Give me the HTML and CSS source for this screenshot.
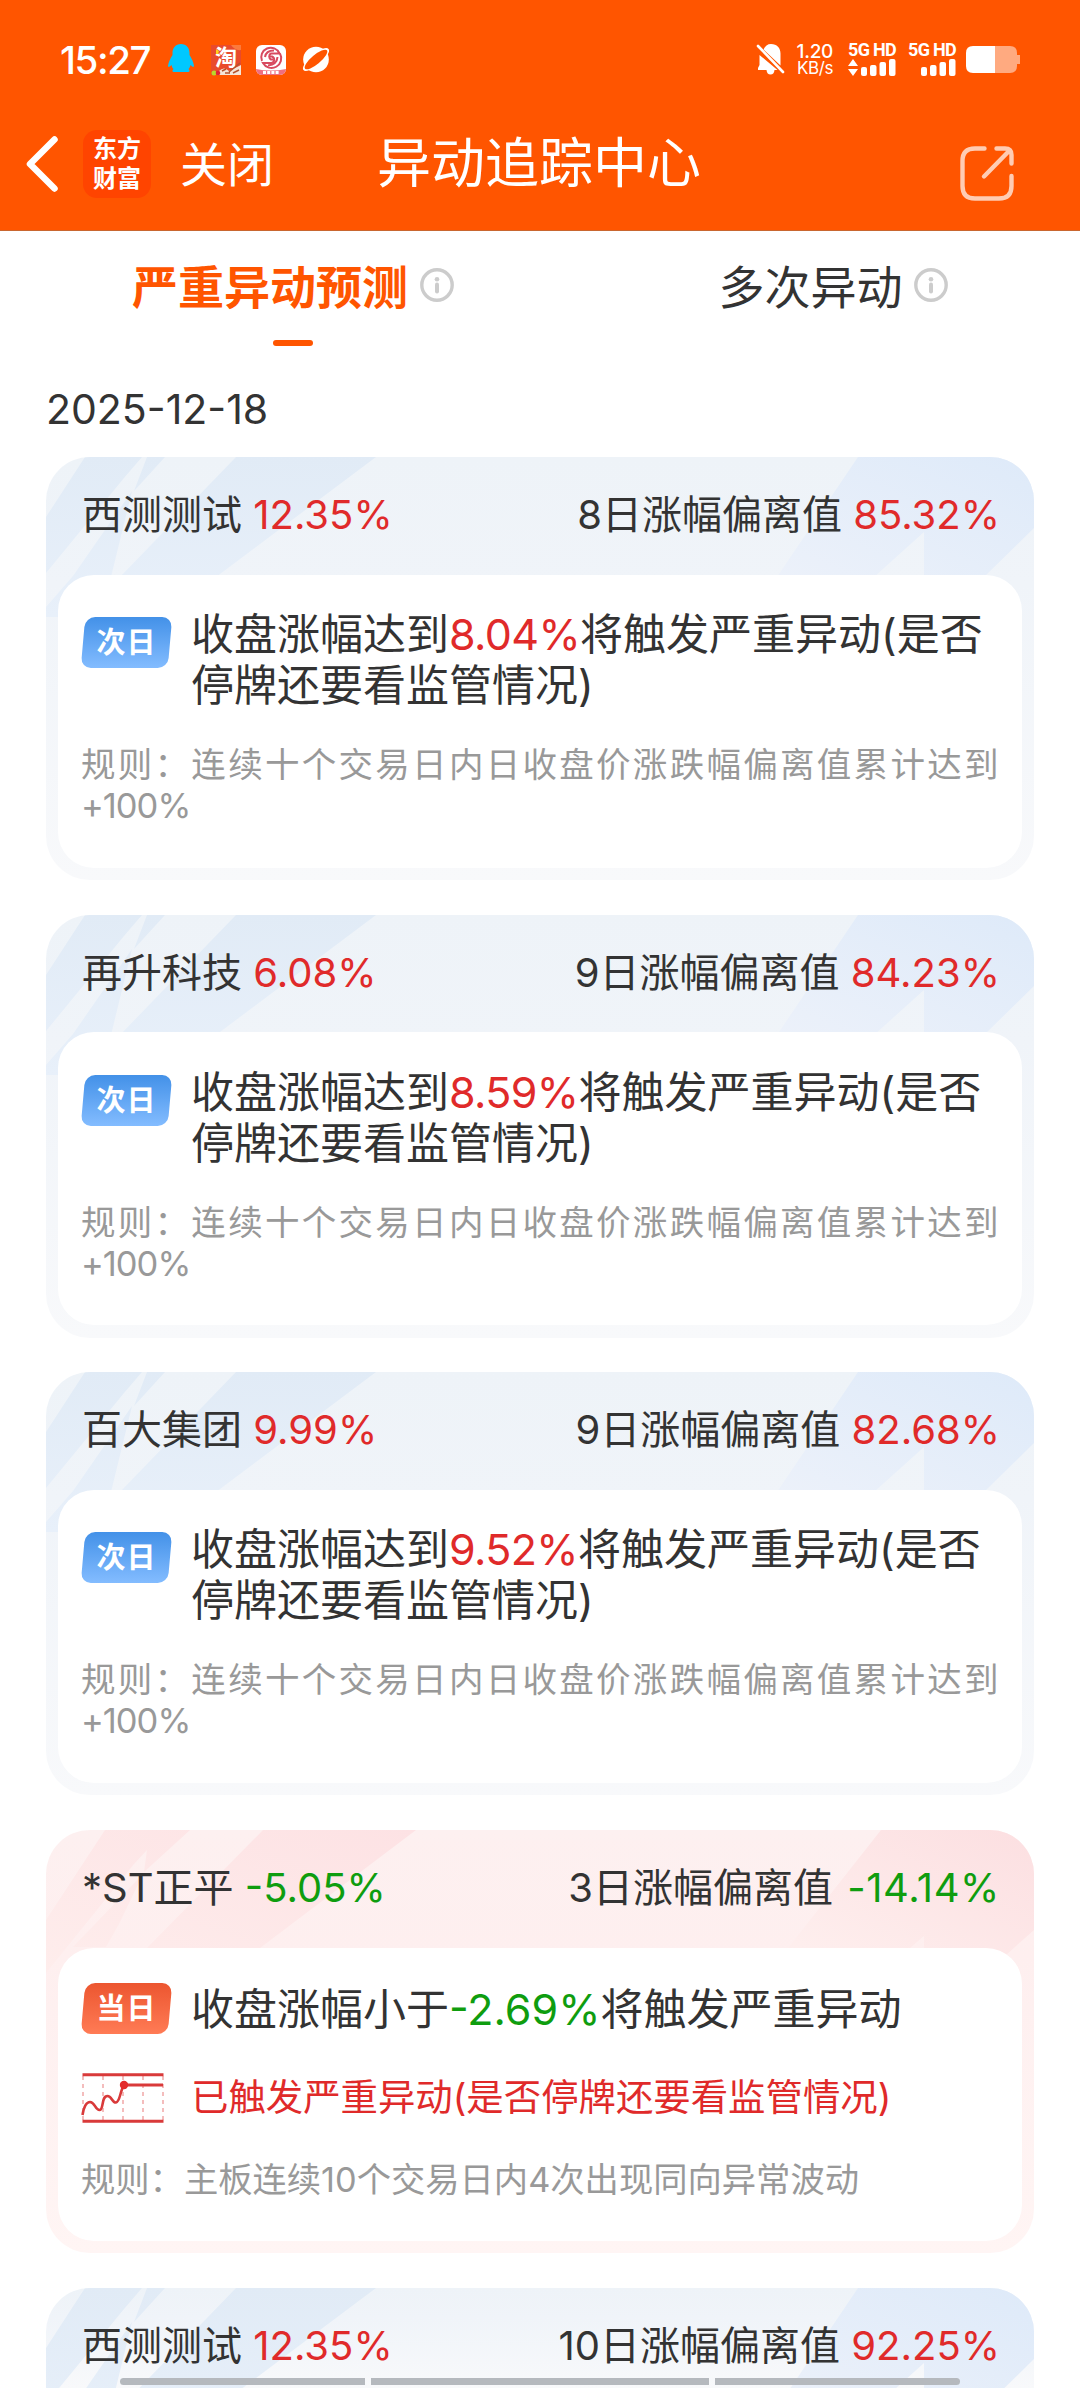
FILE: index.html
```html
<!DOCTYPE html>
<html lang="zh-CN">
<head>
<meta charset="utf-8">
<title>异动追踪中心</title>
<link rel="stylesheet" href="styles.css">
</head>
<body>
<svg class="defs" width="0" height="0" aria-hidden="true">
  <defs>
    <linearGradient id="blueL" x1="0" y1="0" x2="0" y2="1"><stop offset="0" stop-color="#e1ebf6"/><stop offset="1" stop-color="#e8f0fa"/></linearGradient>
    <linearGradient id="blueR" x1="0" y1="1" x2="1" y2="0"><stop offset="0" stop-color="#ecf1fa"/><stop offset="1" stop-color="#deeaf9"/></linearGradient>
    <linearGradient id="redL" x1="0" y1="1" x2="1" y2="0"><stop offset="0" stop-color="#feedec"/><stop offset="1" stop-color="#fde2e4"/></linearGradient>
    <linearGradient id="redR" x1="0" y1="1" x2="1" y2="0"><stop offset="0" stop-color="#feefee"/><stop offset="1" stop-color="#fcdfe1"/></linearGradient>
    <symbol id="rays-blue" viewBox="0 0 988 160">
      <path fill="url(#blueL)" d="M39 0H96L78 21L0 116V60Z M101 0H119L88 34Z M86 34L65 120L52 160H0V150L27 119Z M190 0H330L170 120H74Z"/>
      <path fill="url(#blueR)" d="M812 0H988V71L938 120H878V75L828 120H731Z"/>
    </symbol>
    <symbol id="rays-red" viewBox="0 0 988 160">
      <path fill="url(#redL)" d="M59 0H144L98 42L101 20L88 34L0 143V90Z M97 44L73 94L60 117H27Z M217 0H370L214 118H101Z"/>
      <path fill="url(#redR)" d="M835 0H988V100L960 125L878 118V106L864 118H742Z"/>
    </symbol>
    <symbol id="info" viewBox="0 0 34 34">
      <circle cx="17" cy="17" r="15.2" fill="none" stroke="#ccc" stroke-width="3.4"/>
      <circle cx="17" cy="11.3" r="2.3" fill="#ccc"/>
      <path d="M17 16.5V23.5" stroke="#ccc" stroke-width="4" stroke-linecap="round"/>
    </symbol>
  </defs>
</svg>

<header class="top">
  <div class="status">
    <span class="clock">15:27</span>
    <svg class="qq" viewBox="0 0 26 28"><path fill="#00c8ff" d="M13 0C18.500 0 21.500 4 21.500 9V11C23.500 14 25.500 18 26 22C26 23.500 24.500 23 22.500 21C22 23 21.500 24 20.500 25C22 26 22 28 20 28H6C4 28 4 26 5.500 25C4.500 24 4 23 3.500 21C1.500 23 0 23.500 0 22C.5 18 2.500 14 4.500 11V9C4.500 4 7.500 0 13 0Z"/></svg>
    <span class="taobao">淘
      <svg viewBox="0 0 30 30"><path fill="#fb7a3c" d="M20 0H30V5Q24 6 20 0Z"/><path fill="#ffd21c" d="M5 4L8 6L7 9H5Z"/><path fill="#f5e6d8" d="M8 26Q13 21 18 26L30 20V30H8Z"/><path stroke="#b5542f" stroke-width="1.500" d="M18 27L29 18M11 26L15 24M14 28H19M22 28L28 25"/><circle cx="3" cy="28" r="2.500" fill="#b9d92b"/><circle cx="7" cy="28" r="2.300" fill="#e02035"/></svg>
    </span>
    <svg class="swirl" viewBox="0 0 30 30"><defs><clipPath id="app"><rect width="30" height="30" rx="6"/></clipPath></defs><g clip-path="url(#app)"><rect width="30" height="30" fill="#fff"/><path d="M0 24Q15 27 30 24V30H0Z" fill="#ef6f81"/><g fill="none" stroke="#d84a60" stroke-width="2"><path d="M6 16A9.300 9.300 0 0 1 23.500 8.500H15A3.400 3.400 0 0 0 15 14.500H17"/><path d="M24 8.500A9.300 9.300 0 0 1 7 18H15.500A3.400 3.400 0 0 0 16 11.500H14"/><path d="M9 12Q10 5.500 18 5.500M21.500 12Q21 19.500 12 20.500"/></g><path d="M7 27.500H23" stroke="#fff" stroke-width="3" stroke-dasharray="3 1.200"/></g></svg>
    <svg class="planet" viewBox="0 0 30 28"><circle cx="15" cy="14" r="13.300" fill="#fff"/><g transform="rotate(-40 15 14)"><ellipse cx="15" cy="14" rx="17" ry="5.800" fill="#fff"/><ellipse cx="15" cy="14" rx="14.800" ry="4.700" fill="#ff5500"/></g></svg>
    <span class="spring"></span>
    <svg class="bell" viewBox="0 0 27 31"><path fill="#fff" d="M6.500 5.500C8 2 10.500 0 14 0C20 0 23.500 4 23.500 9.500V21.500ZM2.500 11L20.500 26H17.500Q17 30.500 13.500 30.500Q10 30.500 9.500 26H1V24L2.500 21Z"/><path d="M1 2L26 28" stroke="#fff" stroke-width="2.600" stroke-linecap="round"/></svg>
    <span class="speed"><b>1.20</b><i>KB/s</i></span>
    <span class="sim"><b>5G HD</b><svg viewBox="0 0 48 17"><g fill="#fff"><path d="M0 7L5 0L10 7Z M0 10H10L5 17Z"/><rect x="13" y="8" width="6" height="9" rx="2"/><rect x="22" y="6" width="6.500" height="11" rx="2"/><rect x="31.500" y="3" width="6.500" height="14" rx="2"/><rect x="41" y="0" width="6.500" height="17" rx="2"/></g></svg></span>
    <span class="sim"><b>5G HD</b><svg viewBox="0 0 48 17"><g fill="#fff"><rect x="13" y="8" width="6" height="9" rx="2"/><rect x="22" y="6" width="6.500" height="11" rx="2"/><rect x="31.500" y="3" width="6.500" height="14" rx="2"/><rect x="41" y="0" width="6.500" height="17" rx="2"/></g></svg></span>
    <svg class="battery" viewBox="0 0 54 27"><path fill="#ffaa80" d="M28 0H44Q51 0 51 7V9H54V18H51V20Q51 27 44 27H28Z"/><path fill="#fff" d="M7 0H29V27H7Q0 27 0 20V7Q0 0 7 0Z"/></svg>
  </div>
  <nav class="bar">
    <svg class="back" viewBox="0 0 32 56"><path d="M28.500 3.500L4 28L28.500 52.500" fill="none" stroke="#fff" stroke-width="6.500" stroke-linecap="round" stroke-linejoin="round"/></svg>
    <span class="logo">东方<br>财富</span>
    <span class="close">关闭</span>
    <h1>异动追踪中心</h1>
    <svg class="share" viewBox="0 0 54 55"><g fill="none" stroke="#ffccb3" stroke-width="4.400" stroke-linecap="round"><path d="M24.500 2.500H15Q2.500 2.500 2.500 15V40Q2.500 52.500 15 52.500H39Q51.500 52.500 51.500 40V30"/><path d="M36.500 2.500H45Q51.500 2.500 51.500 9V17.500M49 5L24 30.500"/></g></svg>
  </nav>
</header>

<main>
  <div class="tabs">
    <div class="tab active"><span>严重异动预测</span><svg><use href="#info"/></svg></div>
    <div class="tab"><span>多次异动</span><svg><use href="#info"/></svg></div>
  </div>
  <div class="date">2025-12-18</div>

  <section class="card">
    <svg class="rays"><use href="#rays-blue"/></svg>
    <div class="head"><div>西测测试 <em>12.35%</em></div><div>8日涨幅偏离值 <em>85.32%</em></div></div>
    <div class="panel">
      <div class="row"><span class="badge"><b>次日</b></span><p>收盘涨幅达到<em>8.04%</em>将触发严重异动(是否停牌还要看监管情况)</p></div>
      <p class="rule">规则：连续十个交易日内日收盘价涨跌幅偏离值累计达到<span>+100%</span></p>
    </div>
  </section>

  <section class="card">
    <svg class="rays"><use href="#rays-blue"/></svg>
    <div class="head"><div>再升科技 <em>6.08%</em></div><div>9日涨幅偏离值 <em>84.23%</em></div></div>
    <div class="panel">
      <div class="row"><span class="badge"><b>次日</b></span><p>收盘涨幅达到<em>8.59%</em>将触发严重异动(是否停牌还要看监管情况)</p></div>
      <p class="rule">规则：连续十个交易日内日收盘价涨跌幅偏离值累计达到<span>+100%</span></p>
    </div>
  </section>

  <section class="card">
    <svg class="rays"><use href="#rays-blue"/></svg>
    <div class="head"><div>百大集团 <em>9.99%</em></div><div>9日涨幅偏离值 <em>82.68%</em></div></div>
    <div class="panel">
      <div class="row"><span class="badge"><b>次日</b></span><p>收盘涨幅达到<em>9.52%</em>将触发严重异动(是否停牌还要看监管情况)</p></div>
      <p class="rule">规则：连续十个交易日内日收盘价涨跌幅偏离值累计达到<span>+100%</span></p>
    </div>
  </section>

  <section class="card today">
    <svg class="rays"><use href="#rays-red"/></svg>
    <div class="head"><div>*ST正平 <em>-5.05%</em></div><div>3日涨幅偏离值 <em>-14.14%</em></div></div>
    <div class="panel">
      <div class="row"><span class="badge"><b>当日</b></span><p>收盘涨幅小于<em>-2.69%</em>将触发严重异动</p></div>
      <div class="row hit">
        <svg class="chart" viewBox="0 0 84 50"><g fill="none" stroke="#f3b6b6" stroke-width="1.800" stroke-dasharray="4 4"><path d="M2 3V47M22 3V47M42 3V47M62 3V47M82 3V47"/></g><g fill="none" stroke="#d93a3a" stroke-width="3"><path d="M1.500 1.800H82.500M1.500 48.200H82.500M43 12H82"/><path stroke-width="2.600" d="M1.500 42C3 33 5 29 9 29C14 29 14 37 18.500 37C23 37 20 23 26.500 23C31 23 31 30 35 29.500C39 29 39 18 43 12"/></g><circle cx="43" cy="12" r="4.200" fill="#e32b2b"/></svg>
        <p>已触发严重异动(是否停牌还要看监管情况)</p>
      </div>
      <p class="rule">规则：主板连续10个交易日内4次出现同向异常波动</p>
    </div>
  </section>

  <section class="card cut">
    <svg class="rays"><use href="#rays-blue"/></svg>
    <div class="head"><div>西测测试 <em>12.35%</em></div><div>10日涨幅偏离值 <em>92.25%</em></div></div>
  </section>
</main>

<div class="gesture"><i></i><i></i><i></i></div>
</body>
</html>
```

FILE: styles.css
```css
* { box-sizing: border-box; margin: 0; padding: 0; }
html, body { height: 2388px; overflow: hidden; }
body {
  position: relative;
  width: 1080px;
  background: #fff;
  color: #333;
  font-family: Inter, "Noto Sans CJK SC", sans-serif;
}
em, i { font-style: normal; }
svg { display: block; flex: none; overflow: visible; }
.defs { position: absolute; }

/* Orange header */
.top {
  height: 231px;
  background: #ff5500;
  border-bottom: 1px solid #c9662f;
  color: #fff;
}
.status {
  display: flex;
  align-items: center;
  height: 119px;
  padding-left: 60px;
  padding-right: 60px;
}
.clock { width: 108px; font-size: 38.500px; font-weight: 500; letter-spacing: -1.400px; white-space: nowrap; }
.qq { width: 26px; height: 28px; margin-top: -3px; }
.taobao {
  position: relative;
  width: 30px; height: 30px;
  margin-left: 17px;
  background: #e94a2c;
  font-size: 22px; font-weight: 700; line-height: 25px; text-align: center;
}
.taobao svg { position: absolute; inset: 0; width: 30px; height: 30px; }
.swirl { width: 30px; height: 30px; margin-left: 15px; }
.planet { width: 30px; height: 27px; margin-left: 15px; }
.spring { flex: 1; }
.bell { width: 27px; height: 31px; }
.speed { display: flex; flex-direction: column; width: 37px; margin-left: 12px; text-align: right; }
.speed b { font-size: 19px; font-weight: 500; line-height: 17px; letter-spacing: -0.3px; }
.speed i { font-size: 17px; line-height: 16px; letter-spacing: -0.4px; }
.sim { width: 48px; margin-left: 15px; }
.sim + .sim { margin-left: 12px; }
.sim b { display: block; height: 16px; font: 700 18px/13px Roboto, sans-serif; letter-spacing: -0.7px; white-space: nowrap; }
.sim svg { width: 48px; height: 17px; }
.battery { width: 54px; height: 27px; margin-left: 10px; }

.bar { display: flex; align-items: center; height: 111px; padding: 0 66px 22px 26px; }
.back { width: 32px; height: 56px; }
.logo {
  width: 68px; height: 68px;
  margin-left: 25px; padding-top: 4px;
  border-radius: 14px;
  background: #ff4400;
  font-size: 24px; font-weight: 700; line-height: 30px; text-align: center;
}
.close { margin-left: 29px; font-size: 47px; line-height: 60px; padding-top: 2px; }
.bar h1 { flex: 1; margin-left: 103px; font-size: 54px; font-weight: 400; line-height: 70px; white-space: nowrap; }
.share { width: 54px; height: 55px; margin-top: 20px; }

/* Tabs and date */
.tabs { display: flex; gap: 265px; height: 115px; padding: 24px 0 0 132px; }
.tab { display: flex; align-items: flex-start; gap: 11.500px; height: 91px; font-size: 46px; line-height: 64px; position: relative; }
.tab svg { width: 34px; height: 34px; margin-top: 13px; }
.active span { color: #ff5500; font-weight: 700; }
.active::after {
  content: "";
  position: absolute;
  left: 141px; bottom: 0;
  width: 40px; height: 6px;
  border-radius: 3px;
  background: #ff5500;
}
.date { height: 111px; padding-left: 46px; font-size: 41px; line-height: 127px; }

/* Cards */
.card {
  position: relative;
  width: 988px; height: 423px;
  margin: 0 0 34.700px 46px;
  border-radius: 44px;
  overflow: hidden;
  background: linear-gradient(#eef3f8, #f0f4f9 30%, #f8f9fb);
}
.card em { color: #e02a2a; }
.rays { position: absolute; left: 0; top: 0; width: 988px; height: 160px; }
.head {
  position: relative;
  display: flex;
  justify-content: space-between;
  height: 117.500px;
  padding: 0 34px 0 36px;
  font-size: 40px; line-height: 115px;
  white-space: pre;
}
.panel {
  position: relative;
  height: 293px;
  margin: 0 12px 0 11.500px;
  padding: 34.500px 23.500px 0 23.500px;
  border-radius: 36px;
  background: #fff;
}
.row { display: flex; font-size: 43px; line-height: 51px; }
.row p { width: 806px; margin-left: 19px; }
.row em { letter-spacing: -0.6px; }
.badge { position: relative; flex: none; width: 91px; height: 51px; margin-top: 8px; font-size: 29px; line-height: 52px; text-align: center; z-index: 0; }
.badge::before {
  content: "";
  position: absolute;
  inset: 0 2px;
  z-index: -1;
  border-radius: 10px;
  background: linear-gradient(#4391e8, #83bcff);
  transform: skewX(-5deg);
}
.badge b { color: #fff; font-weight: 700; letter-spacing: 1px; }
.rule { margin-top: 33px; font-size: 34.500px; line-height: 41px; color: #999; text-align: justify; }
.rule span { letter-spacing: -1px; white-space: nowrap; }

.today { background: linear-gradient(#fdf0f0, #feefef 30%, #fff5f4); }
.today .head em, .today .row em { color: #0f9d0f; letter-spacing: 0; }
.today .head div:last-child em { margin-left: 3px; letter-spacing: 0.6px; }
.today .panel { padding-top: 36.500px; }
.today .badge { margin-top: -1px; }
.today .badge::before { background: linear-gradient(#ec5630, #ff7b55); }
.hit { margin-top: 37px; font-size: 37.400px; align-items: center; color: #e02a2a; }
.hit p { margin-left: 26px; }
.chart { width: 84px; height: 50px; }
.today .rule { margin-top: 36px; font-size: 34.300px; }
.cut { height: 100px; margin-bottom: 0; border-radius: 44px 44px 0 0; }
.cut .head { height: 100px; }

/* System gesture bar */
.gesture { position: absolute; left: 120px; top: 2378px; display: flex; gap: 6px; }
.gesture i { width: 245px; height: 7px; background: #b5b9be; }
.gesture i:nth-child(2) { width: 338px; }
.gesture i:first-child { border-radius: 4px 0 0 4px; }
.gesture i:last-child { border-radius: 0 4px 4px 0; }
```
